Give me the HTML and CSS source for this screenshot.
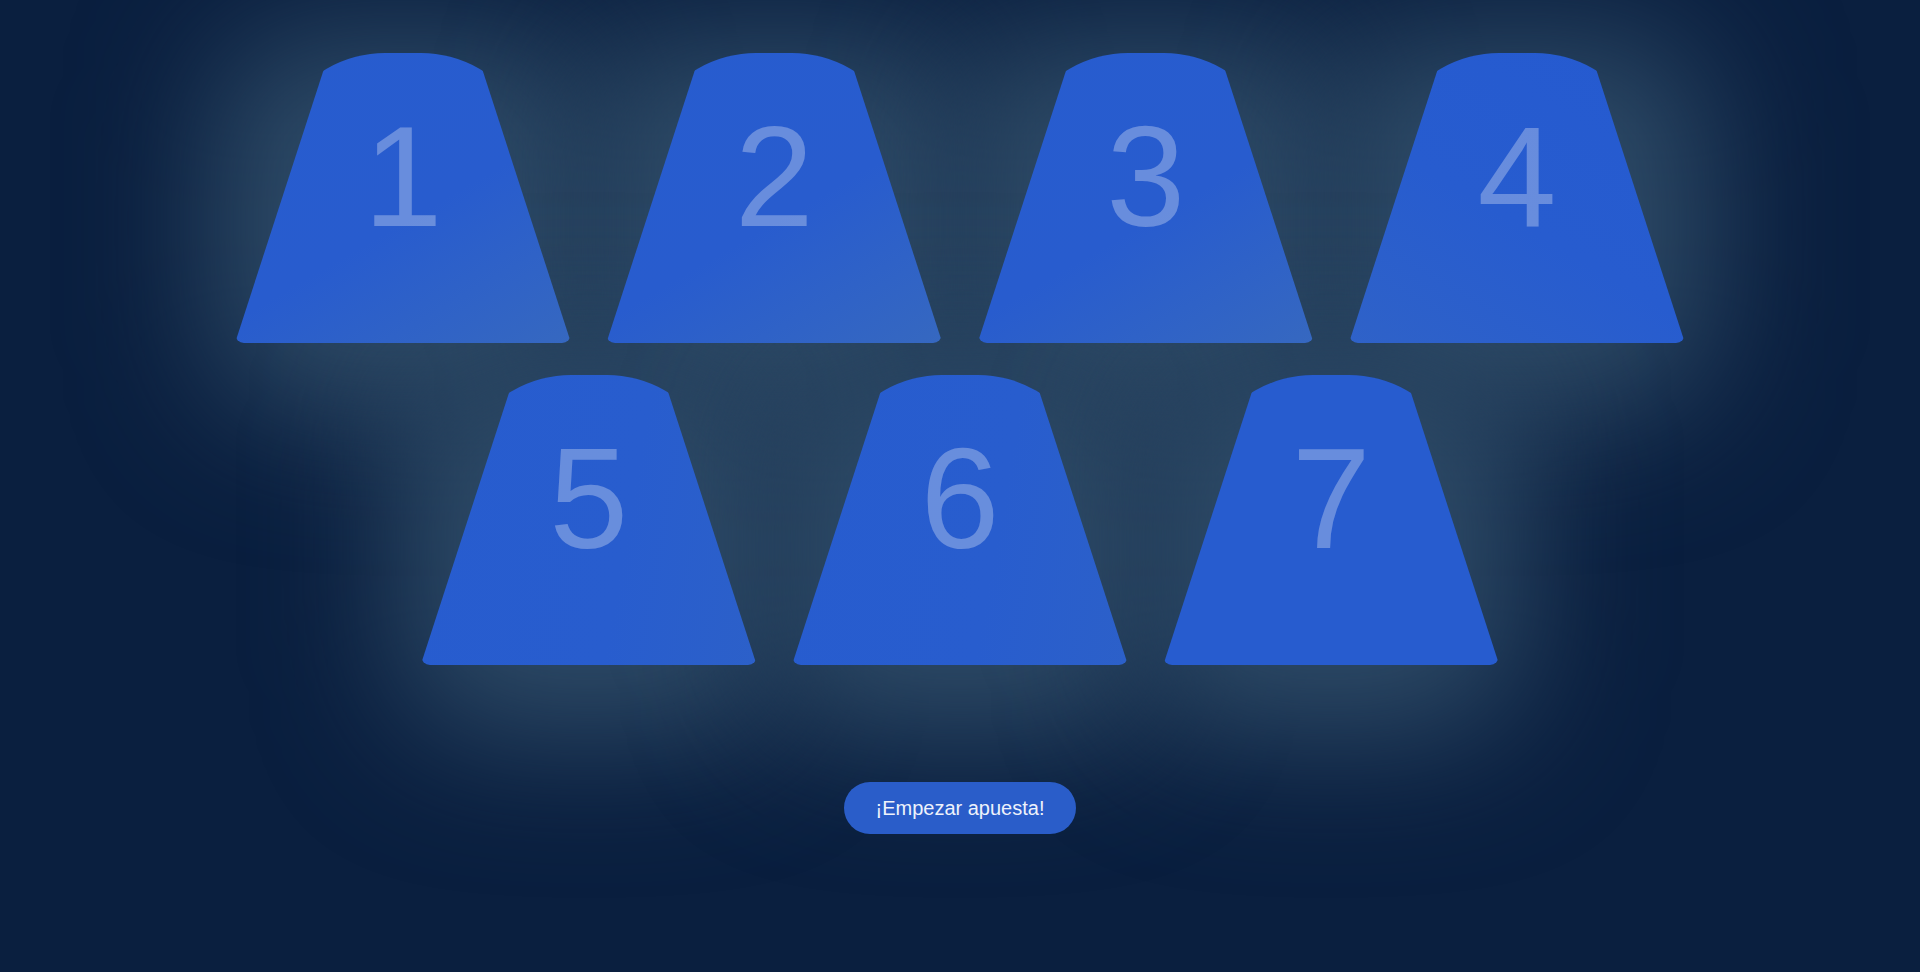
FILE: index.html
```html
<!DOCTYPE html>
<html lang="es">
<head>
<meta charset="utf-8">
<title>Apuesta</title>
<link rel="stylesheet" href="styles.css">
</head>
<body>
<main class="stage">
  <div class="board">
    <div class="row">
      <div class="slot"><div class="cup cup--shine-right"><span class="cup__num">1</span></div></div>
      <div class="slot"><div class="cup cup--shine-right"><span class="cup__num">2</span></div></div>
      <div class="slot"><div class="cup cup--shine-right"><span class="cup__num">3</span></div></div>
      <div class="slot"><div class="cup cup--shine-left"><span class="cup__num">4</span></div></div>
    </div>
    <div class="row">
      <div class="slot"><div class="cup cup--soft"><span class="cup__num">5</span></div></div>
      <div class="slot"><div class="cup cup--soft"><span class="cup__num">6</span></div></div>
      <div class="slot"><div class="cup"><span class="cup__num">7</span></div></div>
    </div>
  </div>
  <button class="start-btn" type="button">¡Empezar apuesta!</button>
</main>
</body>
</html>
```

FILE: styles.css
```css
html, body {
  margin: 0;
  padding: 0;
  height: 100%;
}

body {
  background: #0a1f3f;
  font-family: "Liberation Sans", Arial, sans-serif;
  overflow: hidden;
}

.stage {
  display: flex;
  flex-direction: column;
  align-items: center;
  padding-top: 53px;
  min-height: 100%;
  box-sizing: border-box;
}

.board {
  display: flex;
  flex-direction: column;
  align-items: center;
  gap: 32px;
}

.row {
  display: flex;
  justify-content: center;
  gap: 35.3px;
}

.slot {
  position: relative;
  width: 336px;
  height: 290px;
}

.slot::before {
  content: "";
  position: absolute;
  top: -20px;
  left: -22px;
  right: -22px;
  bottom: -70px;
  border-radius: 90px;
  background: #2e4b67;
  filter: blur(68px);
  z-index: -1;
}

.cup {
  width: 336px;
  height: 290px;
  box-sizing: border-box;
  padding-top: 42px;
  background: #275ccf;
  border-radius: 150px 150px 9px 9px / 200px 200px 9px 9px;
  clip-path: polygon(28% 0, 72% 0, 100% 100%, 0 100%);
  text-align: center;
}

.cup--shine-right {
  background: linear-gradient(150deg, #275ccf 0%, #285cce 55%, #3668c0 100%);
}

.cup--shine-left {
  background: linear-gradient(210deg, #255ad0 0%, #275ccf 55%, #2f62c8 100%);
}

.cup--soft {
  background: linear-gradient(100deg, #275ccf 0%, #285dce 60%, #2c60c9 100%);
}

.cup__num {
  display: block;
  font-size: 142px;
  line-height: normal;
  color: rgba(255, 255, 255, 0.3);
}

.start-btn {
  margin-top: 117px;
  height: 52px;
  padding: 0 32px;
  border: none;
  border-radius: 26px;
  background: #2a5dc9;
  color: #eef2fb;
  font-family: "Liberation Sans", Arial, sans-serif;
  font-size: 20px;
  line-height: 24px;
  cursor: pointer;
}
```
